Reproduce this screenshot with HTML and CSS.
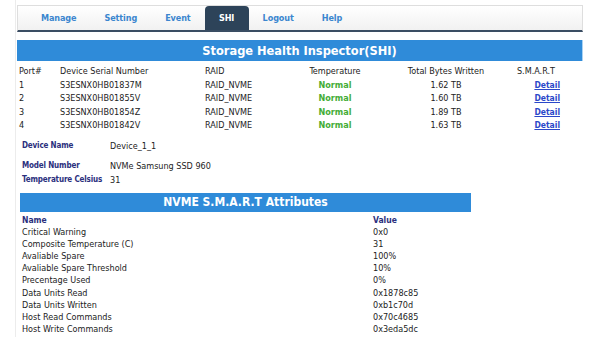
FILE: index.html
```html
<!DOCTYPE html>
<html>
<head>
<meta charset="utf-8">
<link rel="stylesheet" href="styles.css">
</head>
<body>
<div class="page">
  <nav class="nav">
    <a class="tab">Manage</a>
    <a class="tab">Setting</a>
    <a class="tab">Event</a>
    <a class="tab active">SHI</a>
    <a class="tab">Logout</a>
    <a class="tab">Help</a>
  </nav>

  <div class="bar main-bar">Storage Health Inspector(SHI)</div>

  <div class="devices">
    <div class="drow head">
      <span>Port#</span><span>Device Serial Number</span><span>RAID</span><span class="c">Temperature</span><span class="c">Total Bytes Written</span><span class="c">S.M.A.R.T</span>
    </div>
    <div class="drow">
      <span>1</span><span>S3ESNX0HB01837M</span><span>RAID_NVME</span><span class="c ok">Normal</span><span class="c">1.62 TB</span><span class="r"><a class="detail">Detail</a></span>
    </div>
    <div class="drow">
      <span>2</span><span>S3ESNX0HB01855V</span><span>RAID_NVME</span><span class="c ok">Normal</span><span class="c">1.60 TB</span><span class="r"><a class="detail">Detail</a></span>
    </div>
    <div class="drow">
      <span>3</span><span>S3ESNX0HB01854Z</span><span>RAID_NVME</span><span class="c ok">Normal</span><span class="c">1.89 TB</span><span class="r"><a class="detail">Detail</a></span>
    </div>
    <div class="drow">
      <span>4</span><span>S3ESNX0HB01842V</span><span>RAID_NVME</span><span class="c ok">Normal</span><span class="c">1.63 TB</span><span class="r"><a class="detail">Detail</a></span>
    </div>
  </div>

  <div class="info">
    <div class="irow first"><span class="lbl">Device Name</span><span>Device_1_1</span></div>
    <div class="irow"><span class="lbl">Model Number</span><span>NVMe Samsung SSD 960</span></div>
    <div class="irow"><span class="lbl">Temperature Celsius</span><span>31</span></div>
  </div>

  <div class="bar sub-bar">NVME S.M.A.R.T Attributes</div>

  <div class="attrs">
    <div class="arow head"><span>Name</span><span>Value</span></div>
    <div class="arow"><span>Critical Warning</span><span>0x0</span></div>
    <div class="arow"><span>Composite Temperature (C)</span><span>31</span></div>
    <div class="arow"><span>Avaliable Spare</span><span>100%</span></div>
    <div class="arow"><span>Avaliable Spare Threshold</span><span>10%</span></div>
    <div class="arow"><span>Precentage Used</span><span>0%</span></div>
    <div class="arow"><span>Data Units Read</span><span>0x1878c85</span></div>
    <div class="arow"><span>Data Units Written</span><span>0xb1c70d</span></div>
    <div class="arow"><span>Host Read Commands</span><span>0x70c4685</span></div>
    <div class="arow"><span>Host Write Commands</span><span>0x3eda5dc</span></div>
  </div>
</div>
</body>
</html>
```

FILE: styles.css
```css
html, body {
  margin: 0;
  padding: 0;
  background: #ffffff;
}

body {
  font-family: "DejaVu Sans Condensed", "Liberation Sans", sans-serif;
  font-size: 9px;
  color: #222222;
}

.page {
  margin-left: 15px;
  width: 568px;
  min-height: 337px;
  border-left: 1px solid #ececec;
  padding-top: 5px;
  box-sizing: border-box;
  overflow: hidden;
}

.nav {
  margin-left: 1px;
  width: 566px;
  height: 27px;
  box-sizing: border-box;
  border: 1px solid #dedede;
  border-bottom: 2px solid #3a4d63;
  background: linear-gradient(#ffffff, #f1f1f1);
  display: flex;
  align-items: flex-end;
  padding-left: 9px;
}

.tab {
  display: block;
  padding: 0 14px;
  height: 24px;
  line-height: 24px;
  font-weight: bold;
  font-size: 9px;
  letter-spacing: -0.1px;
  color: #3b86cf;
}

.tab.active {
  background: #2d4359;
  color: #ffffff;
  border-radius: 4px 4px 0 0;
  padding: 0 12px;
  width: 20px;
  text-align: center;
}

.bar {
  background: #2f8bd9;
  color: #ffffff;
  font-weight: bold;
  text-align: center;
  box-sizing: border-box;
}

.main-bar {
  margin: 8px 0 0 1px;
  width: 566px;
  height: 21px;
  line-height: 21px;
  font-size: 12.7px;
  border-right: 1px solid #a9d2f3;
}

.devices {
  margin: 4px 0 0 3px;
}

.drow {
  display: grid;
  grid-template-columns: 41px 145px 85px 90px 132px 48px;
  height: 13.5px;
  line-height: 13.5px;
}

.drow .c {
  text-align: center;
}

.drow .r {
  text-align: right;
}

.ok {
  color: #44ad36;
  font-weight: bold;
}

.detail {
  color: #2b47c9;
  font-weight: bold;
  text-decoration: underline;
  font-size: 8.5px;
}

.info {
  margin: 6px 0 0 6px;
}

.irow {
  display: grid;
  grid-template-columns: 88px auto;
  height: 14px;
  line-height: 14px;
  align-items: center;
  white-space: nowrap;
}

.irow.first {
  margin-bottom: 6px;
}

.lbl {
  color: #2b2f7d;
  font-weight: bold;
  font-size: 8px;
  letter-spacing: -0.15px;
}

.sub-bar {
  margin: 6px 0 0 4px;
  width: 451px;
  height: 19px;
  line-height: 19px;
  font-size: 12px;
}

.attrs {
  margin: 2px 0 0 6px;
}

.arow {
  display: grid;
  grid-template-columns: 351px auto;
  height: 12.2px;
  line-height: 12.2px;
}

.arow.head {
  color: #2b2f7d;
  font-weight: bold;
  font-size: 8.5px;
}
```
